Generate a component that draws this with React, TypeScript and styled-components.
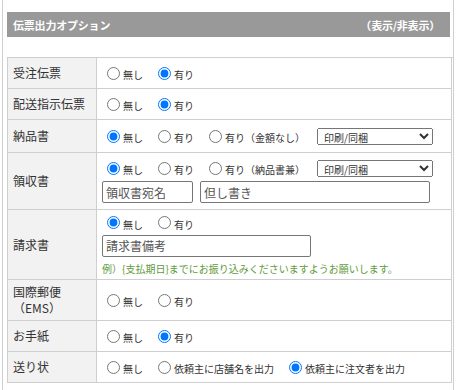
import * as React from 'react';
import styled, { createGlobalStyle } from 'styled-components';

const GlobalStyle = createGlobalStyle`
  html, body {
    margin: 0;
    padding: 0;
    background: #fff;
  }
  body {
    font-family: "Noto Sans CJK JP", "Noto Sans", sans-serif;
    color: #333;
  }
`;

const Page = styled.div`
  margin-left: 2px;
  width: 452px;
  min-height: 390px;
  box-sizing: border-box;
  border-left: 1px solid #cfcfcf;
  border-right: 1px solid #cfcfcf;
  padding: 12px 3px 0 4px;
`;

const Header = styled.div`
  display: flex;
  align-items: center;
  justify-content: space-between;
  height: 25px;
  padding: 0 10px 0 6px;
  background: #999;
  color: #fff;
  font-size: 11px;
  font-weight: 700;
  letter-spacing: -0.2px;
`;

const Table = styled.div`
  margin-top: 20px;
  width: 445px;
  border-top: 1px solid #cfcfcf;
  border-left: 1px solid #cfcfcf;
`;

const Row = styled.div<{ $h: number }>`
  display: grid;
  grid-template-columns: 89px 355px;
  height: ${({ $h }) => $h}px;
`;

const Label = styled.div`
  display: flex;
  align-items: center;
  box-sizing: border-box;
  padding: 0 5px;
  background: #f2f2f2;
  border-right: 1px solid #cfcfcf;
  border-bottom: 1px solid #cfcfcf;
  font-size: 12px;
  line-height: 16px;
`;

const Value = styled.div<{ $gap?: number }>`
  display: flex;
  flex-direction: column;
  justify-content: center;
  gap: ${({ $gap }) => $gap ?? 0}px;
  box-sizing: border-box;
  padding: 0 5px;
  border-right: 1px solid #cfcfcf;
  border-bottom: 1px solid #cfcfcf;
`;

const Line = styled.div`
  display: flex;
  align-items: center;
  height: 18px;
`;

const Opt = styled.label`
  display: inline-flex;
  align-items: center;
  margin-right: 10px;
  font-size: 10px;
  color: #333;
  white-space: nowrap;

  input {
    width: 13px;
    height: 13px;
    margin: 0 3px 0 5px;
  }
  span {
    padding-top: 4px;
    line-height: 12px;
  }
`;

const Select = styled.select`
  width: 116px;
  height: 17px;
  margin-left: 2px;
  padding: 0 2px;
  font-size: 10px;
  font-family: "Noto Sans CJK JP", sans-serif;
  color: #333;
`;

const Inputs = styled.div`
  display: flex;
  gap: 7px;
`;

const TextBox = styled.input<{ $w: number }>`
  width: ${({ $w }) => $w}px;
  height: 22px;
  box-sizing: border-box;
  padding: 0 3px;
  border: 1px solid #767676;
  border-radius: 2px;
  font-size: 12px;
  font-family: "Noto Sans CJK JP", sans-serif;
  color: #333;
  &::placeholder {
    color: #555;
  }
`;

const Note = styled.div`
  margin-top: 2px;
  font-size: 10px;
  line-height: 14px;
  color: #5f9a3c;
  white-space: nowrap;
`;

type Choice = { text: string; checked?: boolean };

const Radios: React.FC<{ name: string; items: Choice[] }> = ({ name, items }) => (
  <>
    {items.map((c) => (
      <Opt key={c.text}>
        <input type="radio" name={name} defaultChecked={c.checked} />
        <span>{c.text}</span>
      </Opt>
    ))}
  </>
);

const PrintSelect = () => (
  <Select defaultValue="print">
    <option value="print">印刷/同梱</option>
    <option value="none">印刷しない</option>
  </Select>
);

export default function App() {
  return (
    <>
      <GlobalStyle />
      <Page>
        <Header>
          <span>伝票出力オプション</span>
          <span>（表示/非表示）</span>
        </Header>
        <Table>
          <Row $h={31}>
            <Label>受注伝票</Label>
            <Value>
              <Line>
                <Radios name="juchu" items={[{ text: '無し' }, { text: '有り', checked: true }]} />
              </Line>
            </Value>
          </Row>
          <Row $h={31}>
            <Label>配送指示伝票</Label>
            <Value>
              <Line>
                <Radios name="haiso" items={[{ text: '無し' }, { text: '有り', checked: true }]} />
              </Line>
            </Value>
          </Row>
          <Row $h={33}>
            <Label>納品書</Label>
            <Value>
              <Line>
                <Radios
                  name="nohin"
                  items={[{ text: '無し', checked: true }, { text: '有り' }, { text: '有り（金額なし）' }]}
                />
                <PrintSelect />
              </Line>
            </Value>
          </Row>
          <Row $h={57}>
            <Label>領収書</Label>
            <Value $gap={4}>
              <Line>
                <Radios
                  name="ryoshu"
                  items={[{ text: '無し', checked: true }, { text: '有り' }, { text: '有り（納品書兼）' }]}
                />
                <PrintSelect />
              </Line>
              <Inputs>
                <TextBox $w={91} placeholder="領収書宛名" />
                <TextBox $w={230} placeholder="但し書き" />
              </Inputs>
            </Value>
          </Row>
          <Row $h={70}>
            <Label>請求書</Label>
            <Value $gap={3}>
              <Line>
                <Radios name="seikyu" items={[{ text: '無し', checked: true }, { text: '有り' }]} />
              </Line>
              <Inputs>
                <TextBox $w={209} placeholder="請求書備考" />
              </Inputs>
              <Note>例）{'{'}支払期日{'}'}までにお振り込みくださいますようお願いします。</Note>
            </Value>
          </Row>
          <Row $h={41}>
            <Label>
              国際郵便
              <br />
              （EMS）
            </Label>
            <Value>
              <Line>
                <Radios name="ems" items={[{ text: '無し' }, { text: '有り' }]} />
              </Line>
            </Value>
          </Row>
          <Row $h={31}>
            <Label>お手紙</Label>
            <Value>
              <Line>
                <Radios name="tegami" items={[{ text: '無し' }, { text: '有り', checked: true }]} />
              </Line>
            </Value>
          </Row>
          <Row $h={31}>
            <Label>送り状</Label>
            <Value>
              <Line>
                <Radios
                  name="okurijo"
                  items={[
                    { text: '無し' },
                    { text: '依頼主に店舗名を出力' },
                    { text: '依頼主に注文者を出力', checked: true },
                  ]}
                />
              </Line>
            </Value>
          </Row>
        </Table>
      </Page>
    </>
  );
}
